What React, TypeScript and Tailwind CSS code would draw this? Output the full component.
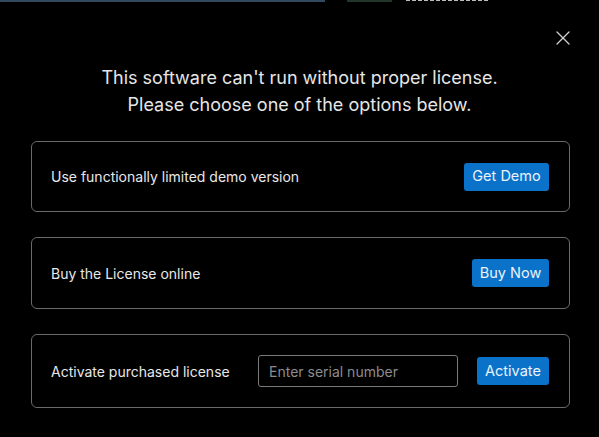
import { X } from "lucide-react";

function Btn({ children, className = "" }: { children: React.ReactNode; className?: string }) {
  return (
    <button
      className={`h-[28px] rounded-[3px] bg-[#0b72c9] text-[14.5px] leading-none text-[#eaf3fc] ${className}`}
    >
      {children}
    </button>
  );
}

function Card({ height, children }: { height: string; children: React.ReactNode }) {
  return (
    <div
      className={`flex items-center justify-between rounded-[6px] border border-[#6a6a6a] pl-[19px] pr-[20px] ${height}`}
    >
      {children}
    </div>
  );
}

export default function App() {
  return (
    <div className="relative flex h-[437px] w-[599px] flex-col overflow-hidden bg-black font-['Inter','Noto_Sans',sans-serif] text-[#e8e8e8]">
      {/* bits of the window behind */}
      <div className="flex h-[2px] items-start">
        <div className="h-[2px] w-[325px] bg-[#33495e]" />
        <div className="ml-[22px] h-[2px] w-[45px] bg-[#23362a]" />
        <div className="ml-[14px] h-[1px] w-[84px] bg-[repeating-linear-gradient(90deg,#bdbdbd_0_4px,transparent_4px_6px)]" />
      </div>

      <div className="flex justify-end pr-[24px] pt-[24px]">
        <button className="flex h-[24px] w-[24px] items-center justify-center text-[#cfcfcf]">
          <X size={24} strokeWidth={1.3} />
        </button>
      </div>

      <div className="mt-[14px] text-center text-[18px] leading-[27px] text-[#e6e6e6]">
        <p>This software can't run without proper license.</p>
        <p>Please choose one of the options below.</p>
      </div>

      <div className="mt-[23px] flex flex-col gap-[25px] pl-[31px] pr-[29px] text-[14px]">
        <Card height="h-[71px]">
          <span>Use functionally limited demo version</span>
          <Btn className="w-[85px]">Get Demo</Btn>
        </Card>
        <Card height="h-[72px]">
          <span>Buy the License online</span>
          <Btn className="w-[77px]">Buy Now</Btn>
        </Card>
        <Card height="h-[74px]">
          <span>Activate purchased license</span>
          <div className="flex items-center gap-[19px]">
            <input
              placeholder="Enter serial number"
              className="h-[32px] w-[200px] rounded-[3px] border border-[#7a7a7a] bg-black px-[10px] text-[14px] text-[#e8e8e8] outline-none placeholder:text-[#8c8c8c]"
            />
            <Btn className="w-[72px]">Activate</Btn>
          </div>
        </Card>
      </div>
    </div>
  );
}
